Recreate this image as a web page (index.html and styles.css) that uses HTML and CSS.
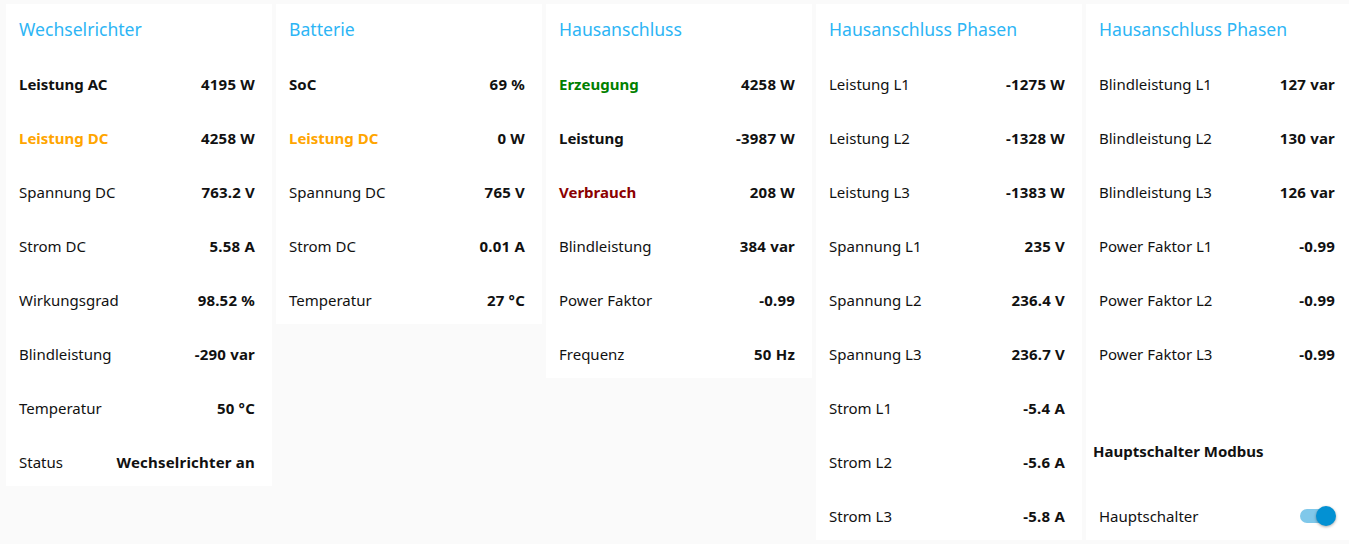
FILE: index.html
```html
<!DOCTYPE html>
<html lang="de">
<head>
<meta charset="utf-8">
<title>Dashboard</title>
<link rel="stylesheet" href="styles.css">
</head>
<body>
<div class="board">
  <section class="card">
    <h2 class="title">Wechselrichter</h2>
    <div class="rows">
      <div class="row"><span class="label strong">Leistung AC</span><span class="value">4195 W</span></div>
      <div class="row"><span class="label strong orange">Leistung DC</span><span class="value">4258 W</span></div>
      <div class="row"><span class="label">Spannung DC</span><span class="value">763.2 V</span></div>
      <div class="row"><span class="label">Strom DC</span><span class="value">5.58 A</span></div>
      <div class="row"><span class="label">Wirkungsgrad</span><span class="value">98.52 %</span></div>
      <div class="row"><span class="label">Blindleistung</span><span class="value">-290 var</span></div>
      <div class="row"><span class="label">Temperatur</span><span class="value">50 °C</span></div>
      <div class="row"><span class="label">Status</span><span class="value">Wechselrichter an</span></div>
    </div>
  </section>
  <section class="card">
    <h2 class="title">Batterie</h2>
    <div class="rows">
      <div class="row"><span class="label strong">SoC</span><span class="value">69 %</span></div>
      <div class="row"><span class="label strong orange">Leistung DC</span><span class="value">0 W</span></div>
      <div class="row"><span class="label">Spannung DC</span><span class="value">765 V</span></div>
      <div class="row"><span class="label">Strom DC</span><span class="value">0.01 A</span></div>
      <div class="row"><span class="label">Temperatur</span><span class="value">27 °C</span></div>
    </div>
  </section>
  <section class="card">
    <h2 class="title">Hausanschluss</h2>
    <div class="rows">
      <div class="row"><span class="label strong green">Erzeugung</span><span class="value">4258 W</span></div>
      <div class="row"><span class="label strong">Leistung</span><span class="value">-3987 W</span></div>
      <div class="row"><span class="label strong red">Verbrauch</span><span class="value">208 W</span></div>
      <div class="row"><span class="label">Blindleistung</span><span class="value">384 var</span></div>
      <div class="row"><span class="label">Power Faktor</span><span class="value">-0.99</span></div>
      <div class="row"><span class="label">Frequenz</span><span class="value">50 Hz</span></div>
    </div>
  </section>
  <section class="card">
    <h2 class="title">Hausanschluss Phasen</h2>
    <div class="rows">
      <div class="row"><span class="label">Leistung L1</span><span class="value">-1275 W</span></div>
      <div class="row"><span class="label">Leistung L2</span><span class="value">-1328 W</span></div>
      <div class="row"><span class="label">Leistung L3</span><span class="value">-1383 W</span></div>
      <div class="row"><span class="label">Spannung L1</span><span class="value">235 V</span></div>
      <div class="row"><span class="label">Spannung L2</span><span class="value">236.4 V</span></div>
      <div class="row"><span class="label">Spannung L3</span><span class="value">236.7 V</span></div>
      <div class="row"><span class="label">Strom L1</span><span class="value">-5.4 A</span></div>
      <div class="row"><span class="label">Strom L2</span><span class="value">-5.6 A</span></div>
      <div class="row"><span class="label">Strom L3</span><span class="value">-5.8 A</span></div>
    </div>
  </section>
  <section class="card">
    <h2 class="title">Hausanschluss Phasen</h2>
    <div class="rows">
      <div class="row"><span class="label">Blindleistung L1</span><span class="value">127 var</span></div>
      <div class="row"><span class="label">Blindleistung L2</span><span class="value">130 var</span></div>
      <div class="row"><span class="label">Blindleistung L3</span><span class="value">126 var</span></div>
      <div class="row"><span class="label">Power Faktor L1</span><span class="value">-0.99</span></div>
      <div class="row"><span class="label">Power Faktor L2</span><span class="value">-0.99</span></div>
      <div class="row"><span class="label">Power Faktor L3</span><span class="value">-0.99</span></div>
    </div>
    <h3 class="subtitle">Hauptschalter Modbus</h3>
    <div class="row switch-row">
      <span class="label">Hauptschalter</span>
      <span class="toggle on"><span class="track"></span><span class="thumb"></span></span>
    </div>
  </section>
</div>
</body>
</html>
```

FILE: styles.css
```css
html, body {
  margin: 0;
  padding: 0;
  background: #fafafa;
  overflow: hidden;
}
body {
  font-family: "Noto Sans", "Open Sans", sans-serif;
  color: #111;
}
.board {
  display: flex;
  align-items: flex-start;
  gap: 4px;
  padding: 4px 0 0 6px;
  width: max-content;
}
.card {
  width: 266px;
  background: #fff;
  box-sizing: border-box;
  padding: 0 17px 0 13px;
}
.title {
  margin: 0;
  height: 50px;
  display: flex;
  align-items: center;
  font-size: 17.6px;
  font-weight: 400;
  color: #2db5f5;
}
.rows {
  margin-top: 6px;
  display: flex;
  flex-direction: column;
  gap: 6px;
}
.row {
  height: 48px;
  display: flex;
  align-items: center;
  justify-content: space-between;
  font-size: 15px;
}
.label { font-weight: 400; }
.label.strong { font-weight: 700; }
.orange { color: #ffa500; }
.green { color: #008000; }
.red { color: #8b0000; }
.value { font-weight: 700; letter-spacing: 0.2px; }
.subtitle {
  margin: 63px 0 0 -6px;
  height: 20px;
  line-height: 20px;
  font-size: 15px;
  font-weight: 700;
}
.switch-row {
  margin-top: 31px;
}
.toggle {
  position: relative;
  width: 36px;
  height: 20px;
  margin-right: -1px;
}
.toggle .track {
  position: absolute;
  left: 0;
  top: 3px;
  width: 32px;
  height: 14px;
  border-radius: 7px;
  background: #80c8ea;
}
.toggle .thumb {
  position: absolute;
  right: 0;
  top: 0;
  width: 20px;
  height: 20px;
  border-radius: 50%;
  background: #0391d3;
  box-shadow: 0 1px 3px rgba(0,0,0,0.35);
}
```
